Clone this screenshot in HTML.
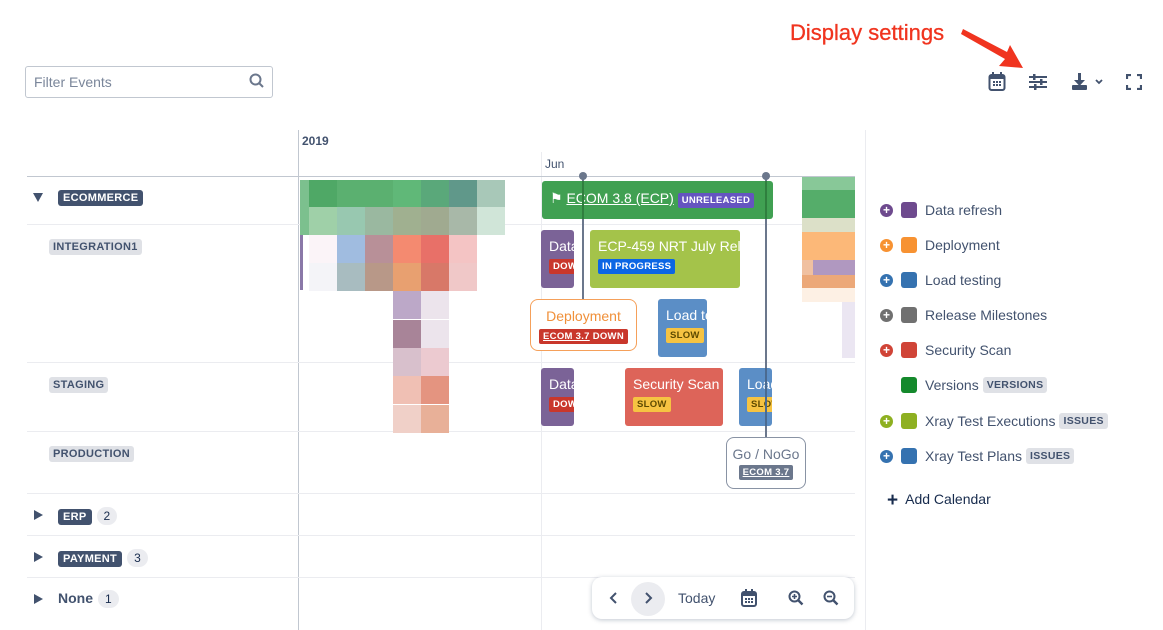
<!DOCTYPE html>
<html><head><meta charset="utf-8"><style>
*{box-sizing:border-box;margin:0;padding:0}
body{width:1163px;height:630px;overflow:hidden;background:#fff;font-family:"Liberation Sans",sans-serif;color:#172b4d;position:relative}
.a{position:absolute}
.hl{position:absolute;height:1px;background:#ebecf0}
.px{position:absolute;width:28px;height:28px}
.lab{position:absolute;font-size:11px;font-weight:bold;background:#dfe1e6;color:#42526e;padding:2px 4px;border-radius:3px;letter-spacing:.3px}
.dk{position:absolute;font-size:11px;font-weight:bold;background:#42526e;color:#fff;padding:2px 5px;border-radius:3px;letter-spacing:.3px}
.cnt{display:inline-block;font-size:12px;background:#ebecf0;color:#172b4d;border-radius:9px;padding:2px 7px;margin-left:5px}
.tri{position:absolute;width:0;height:0}
.ev{position:absolute;border-radius:3px;color:#fff;font-size:14px;overflow:hidden;white-space:nowrap;padding:8px 0 0 8px}
.bd{display:inline-block;font-size:9.5px;font-weight:bold;padding:2px 4px;border-radius:2px;letter-spacing:.3px;margin-top:5px}
.red{background:#c9372c;color:#fff}
.slow{background:#f6c342;color:#5e4a00}
.lg{position:absolute;left:880px;height:18px;font-size:14px;color:#42526e;display:flex;align-items:center}
.pl{width:13px;height:13px;border-radius:50%;color:#fff;font-size:12px;font-weight:bold;line-height:13px;text-align:center;margin-right:8px}
.sq{width:16px;height:16px;border-radius:3px;margin-right:8px}
.tag{font-size:10.5px;font-weight:bold;background:#dfe1e6;color:#42526e;padding:2px 4px;border-radius:3px;margin-left:4px;letter-spacing:.3px}
</style></head><body>

<div class="a" style="left:790px;top:20px;font-size:22px;color:#f0341f;-webkit-text-stroke:0.3px #f0341f">Display settings</div>
<svg class="a" style="left:955px;top:26px" width="80" height="50"><polygon points="6,8 8,3 52,26 55,19 68,42 44,40 50,33" fill="#f0341f"/></svg>

<div class="a" style="left:25px;top:66px;width:248px;height:32px;border:1px solid #c1c7d0;border-radius:3px;font-size:14px;color:#7a869a;padding:7px 8px">Filter Events</div>
<svg class="a" style="left:249px;top:73px" width="16" height="16"><circle cx="6.5" cy="6.5" r="5" stroke="#6b778c" stroke-width="2" fill="none"/><line x1="10" y1="10" x2="14" y2="14" stroke="#6b778c" stroke-width="2"/></svg>

<svg class="a" style="left:988px;top:72px" width="18" height="20"><rect x="1.5" y="3" width="15" height="15" rx="2" fill="none" stroke="#42526e" stroke-width="2"/><rect x="1.5" y="3" width="15" height="4" fill="#42526e"/><rect x="4" y="0" width="2" height="4" fill="#42526e"/><rect x="12" y="0" width="2" height="4" fill="#42526e"/><g fill="#42526e"><rect x="5" y="9" width="2" height="2"/><rect x="8" y="9" width="2" height="2"/><rect x="11" y="9" width="2" height="2"/><rect x="5" y="12" width="2" height="2"/><rect x="8" y="12" width="2" height="2"/><rect x="11" y="12" width="2" height="2"/></g></svg>
<svg class="a" style="left:1029px;top:74px" width="18" height="16"><g fill="#42526e"><rect y="2" width="18" height="2"/><rect y="7" width="18" height="2"/><rect y="12" width="18" height="2"/><rect x="4" y="0" width="2.5" height="6"/><rect x="11" y="5" width="2.5" height="6"/><rect x="5" y="10" width="2.5" height="6"/></g></svg>
<svg class="a" style="left:1072px;top:73px" width="36" height="18"><g fill="#42526e"><rect x="6" y="0" width="3" height="8"/><polygon points="2,7 13,7 7.5,13"/><rect x="0" y="12" width="15" height="5" rx="1"/></g><polyline points="24,7 27,10 30,7" fill="none" stroke="#42526e" stroke-width="1.8"/></svg>
<svg class="a" style="left:1126px;top:74px" width="16" height="16" fill="none" stroke="#42526e" stroke-width="2.2"><path d="M1 5V1H5M11 1H15V5M15 11V15H11M5 15H1V11"/></svg>

<!-- grid -->
<div class="a" style="left:298px;top:130px;width:1px;height:500px;background:#c1c7d0"></div>
<div class="a" style="left:865px;top:130px;width:1px;height:500px;background:#ebecf0"></div>
<div class="a" style="left:541px;top:152px;width:1px;height:478px;background:#ebecf0"></div>
<div class="a" style="left:27px;top:176px;width:828px;height:1px;background:#c1c7d0"></div>
<div class="hl" style="left:27px;top:224px;width:828px"></div>
<div class="hl" style="left:27px;top:362px;width:828px"></div>
<div class="hl" style="left:27px;top:431px;width:828px"></div>
<div class="hl" style="left:27px;top:493px;width:828px"></div>
<div class="hl" style="left:27px;top:535px;width:828px"></div>
<div class="hl" style="left:27px;top:577px;width:828px"></div>
<div class="a" style="left:302px;top:134px;font-size:12px;font-weight:bold;color:#42526e">2019</div>
<div class="a" style="left:545px;top:157px;font-size:12px;color:#42526e">Jun</div>

<!-- left labels -->
<div class="tri" style="left:33px;top:193px;border-left:5px solid transparent;border-right:5px solid transparent;border-top:9px solid #42526e"></div>
<div class="dk" style="left:58px;top:190px">ECOMMERCE</div>
<div class="lab" style="left:49px;top:239px">INTEGRATION1</div>
<div class="lab" style="left:49px;top:377px">STAGING</div>
<div class="lab" style="left:49px;top:446px">PRODUCTION</div>
<div class="tri" style="left:34px;top:510px;border-top:5px solid transparent;border-bottom:5px solid transparent;border-left:9px solid #42526e"></div>
<div class="a" style="left:58px;top:507px"><span class="dk" style="position:static;display:inline-block">ERP</span><span class="cnt">2</span></div>
<div class="tri" style="left:34px;top:552px;border-top:5px solid transparent;border-bottom:5px solid transparent;border-left:9px solid #42526e"></div>
<div class="a" style="left:58px;top:549px"><span class="dk" style="position:static;display:inline-block">PAYMENT</span><span class="cnt">3</span></div>
<div class="tri" style="left:34px;top:594px;border-top:5px solid transparent;border-bottom:5px solid transparent;border-left:9px solid #42526e"></div>
<div class="a" style="left:58px;top:590px;font-size:14px;font-weight:bold;color:#42526e">None<span class="cnt" style="font-weight:normal">1</span></div>

<!-- pixel block left -->
<div class="a" style="left:300px;top:180px;width:9px;height:55px;background:#7cc08e"></div>
<div class="a" style="left:300px;top:235px;width:3px;height:55px;background:#8a78a8"></div>
<div class="px" style="left:309px;top:180px;background:#4fa866"></div><div class="px" style="left:337px;top:180px;background:#5bb070"></div><div class="px" style="left:365px;top:180px;background:#5bb070"></div><div class="px" style="left:393px;top:180px;background:#60b878"></div><div class="px" style="left:421px;top:180px;background:#5aa87a"></div><div class="px" style="left:449px;top:180px;background:#60988a"></div><div class="px" style="left:477px;top:180px;background:#a8c8b8"></div>
<div class="px" style="left:309px;top:207px;background:#9fd0a8"></div><div class="px" style="left:337px;top:207px;background:#98c8b0"></div><div class="px" style="left:365px;top:207px;background:#9ab8a0"></div><div class="px" style="left:393px;top:207px;background:#a0b090"></div><div class="px" style="left:421px;top:207px;background:#a0aa90"></div><div class="px" style="left:449px;top:207px;background:#a8b8a8"></div><div class="px" style="left:477px;top:207px;background:#d0e5d8"></div>
<div class="px" style="left:309px;top:235px;background:#fbf4f8"></div><div class="px" style="left:337px;top:235px;background:#a0bce0"></div><div class="px" style="left:365px;top:235px;background:#b89098"></div><div class="px" style="left:393px;top:235px;background:#f48a70"></div><div class="px" style="left:421px;top:235px;background:#e87068"></div><div class="px" style="left:449px;top:235px;background:#f4c4c4"></div>
<div class="px" style="left:309px;top:263px;background:#f4f4f8"></div><div class="px" style="left:337px;top:263px;background:#a8bcc0"></div><div class="px" style="left:365px;top:263px;background:#b89888"></div><div class="px" style="left:393px;top:263px;background:#e8a070"></div><div class="px" style="left:421px;top:263px;background:#d87868"></div><div class="px" style="left:449px;top:263px;background:#f0c8c8"></div>
<div class="px" style="left:393px;top:291px;background:#bca8c8"></div><div class="px" style="left:421px;top:291px;background:#ece4ec"></div>
<div class="px" style="left:393px;top:320px;background:#a88498"></div><div class="px" style="left:421px;top:320px;background:#ece4ec"></div>
<div class="px" style="left:393px;top:348px;background:#d8c0cc"></div><div class="px" style="left:421px;top:348px;background:#eccad0"></div>
<div class="px" style="left:393px;top:376px;background:#f0c0b4"></div><div class="px" style="left:421px;top:376px;background:#e49480"></div>
<div class="px" style="left:393px;top:405px;background:#f0d0c8"></div><div class="px" style="left:421px;top:405px;background:#e8b098"></div>

<!-- pixel block right -->
<div class="a" style="left:802px;top:177px;width:53px;height:13px;background:#88c898"></div>
<div class="a" style="left:802px;top:190px;width:53px;height:28px;background:#55ad6a"></div>
<div class="a" style="left:802px;top:218px;width:53px;height:14px;background:#dce0c8"></div>
<div class="a" style="left:802px;top:232px;width:53px;height:28px;background:#fcb878"></div>
<div class="a" style="left:802px;top:260px;width:11px;height:15px;background:#f0c0a0"></div>
<div class="a" style="left:813px;top:260px;width:42px;height:15px;background:#b098c0"></div>
<div class="a" style="left:802px;top:275px;width:53px;height:13px;background:#eca878"></div>
<div class="a" style="left:802px;top:288px;width:53px;height:14px;background:#fdf0e4"></div>
<div class="a" style="left:842px;top:302px;width:13px;height:56px;background:#ebe6f2"></div>

<!-- milestone lines -->
<div class="a" style="left:582px;top:175px;width:2px;height:125px;background:#6b778c"></div>
<div class="a" style="left:765px;top:175px;width:2px;height:262px;background:#6b778c"></div>
<div class="a" style="left:579px;top:172px;width:8px;height:8px;border-radius:50%;background:#6b778c"></div>
<div class="a" style="left:762px;top:172px;width:8px;height:8px;border-radius:50%;background:#6b778c"></div>

<!-- events -->
<div class="ev" style="left:542px;top:181px;width:231px;height:38px;background:#40a052;padding:9px 0 0 8px;font-size:14px">&#9873; <u>ECOM 3.8 (ECP)</u> <span class="bd" style="background:#6554c0;margin:0">UNRELEASED</span></div>
<div class="a" style="left:582px;top:181px;width:2px;height:38px;background:#2f7f3e"></div>
<div class="a" style="left:765px;top:181px;width:2px;height:38px;background:#2f7f3e"></div>
<div class="ev" style="left:541px;top:230px;width:33px;height:58px;background:#7b6397">Data<br><span class="bd red">DOWN</span></div>
<div class="ev" style="left:590px;top:230px;width:150px;height:58px;background:#a4c34a">ECP-459 NRT July Release<br><span class="bd" style="background:#0c66e4">IN PROGRESS</span></div>
<div class="a" style="left:582px;top:230px;width:2px;height:70px;background:#6b778c"></div>
<div class="ev" style="left:530px;top:299px;width:107px;height:52px;background:#fff;border:1px solid #f5a05a;border-radius:8px;color:#f0903a;text-align:center;padding:8px 0 0 0">Deployment<br><span class="bd red"><u>ECOM 3.7</u> DOWN</span></div>
<div class="ev" style="left:658px;top:299px;width:49px;height:58px;background:#5b8ec6">Load testing<br><span class="bd slow">SLOW</span></div>
<div class="ev" style="left:541px;top:368px;width:33px;height:58px;background:#7b6397">Data<br><span class="bd red">DOWN</span></div>
<div class="ev" style="left:625px;top:368px;width:98px;height:58px;background:#dd6459">Security Scan<br><span class="bd slow">SLOW</span></div>
<div class="ev" style="left:739px;top:368px;width:33px;height:58px;background:#5b8ec6">Load<br><span class="bd slow">SLOW</span></div>
<div class="a" style="left:765px;top:368px;width:2px;height:58px;background:#4a6a90"></div>
<div class="ev" style="left:726px;top:437px;width:80px;height:52px;background:#fff;border:1px solid #8993a4;border-radius:8px;color:#6b778c;text-align:center;padding:8px 0 0 0">Go / NoGo<br><span class="bd" style="background:#6b778c;color:#fff;margin-top:3px"><u>ECOM 3.7</u></span></div>

<!-- bottom toolbar -->
<div class="a" style="left:592px;top:577px;width:262px;height:42px;background:#fff;border-radius:10px;box-shadow:0 1px 5px rgba(9,30,66,.25)"></div>
<svg class="a" style="left:608px;top:591px" width="12" height="14"><polyline points="8,2 3,7 8,12" fill="none" stroke="#42526e" stroke-width="2"/></svg>
<div class="a" style="left:631px;top:582px;width:34px;height:34px;border-radius:50%;background:#ebecf0"></div>
<svg class="a" style="left:642px;top:591px" width="12" height="14"><polyline points="4,2 9,7 4,12" fill="none" stroke="#42526e" stroke-width="2"/></svg>
<div class="a" style="left:678px;top:590px;font-size:14px;color:#42526e">Today</div>
<svg class="a" style="left:741px;top:589px" width="16" height="18"><rect x="1" y="3" width="14" height="14" rx="2" fill="none" stroke="#42526e" stroke-width="2"/><rect x="1" y="3" width="14" height="4" fill="#42526e"/><rect x="4" y="0" width="2" height="4" fill="#42526e"/><rect x="10" y="0" width="2" height="4" fill="#42526e"/><g fill="#42526e"><rect x="4" y="9" width="2" height="2"/><rect x="7" y="9" width="2" height="2"/><rect x="10" y="9" width="2" height="2"/><rect x="4" y="12" width="2" height="2"/><rect x="7" y="12" width="2" height="2"/><rect x="10" y="12" width="2" height="2"/></g></svg>
<svg class="a" style="left:788px;top:590px" width="16" height="16"><circle cx="6.5" cy="6.5" r="5" fill="none" stroke="#42526e" stroke-width="2"/><line x1="10" y1="10" x2="14.5" y2="14.5" stroke="#42526e" stroke-width="2.4"/><path d="M4 6.5H9M6.5 4V9" stroke="#42526e" stroke-width="1.6"/></svg>
<svg class="a" style="left:823px;top:590px" width="16" height="16"><circle cx="6.5" cy="6.5" r="5" fill="none" stroke="#42526e" stroke-width="2"/><line x1="10" y1="10" x2="14.5" y2="14.5" stroke="#42526e" stroke-width="2.4"/><path d="M4 6.5H9" stroke="#42526e" stroke-width="1.6"/></svg>

<!-- legend -->
<div class="lg" style="top:201px"><div class="pl" style="background:#6e4a8e">+</div><div class="sq" style="background:#6e4a8e"></div>Data refresh</div>
<div class="lg" style="top:236px"><div class="pl" style="background:#f79232">+</div><div class="sq" style="background:#f79232"></div>Deployment</div>
<div class="lg" style="top:271px"><div class="pl" style="background:#3572b0">+</div><div class="sq" style="background:#3572b0"></div>Load testing</div>
<div class="lg" style="top:306px"><div class="pl" style="background:#707070">+</div><div class="sq" style="background:#707070"></div>Release Milestones</div>
<div class="lg" style="top:341px"><div class="pl" style="background:#d04437">+</div><div class="sq" style="background:#d04437"></div>Security Scan</div>
<div class="lg" style="top:376px"><div class="pl" style="background:transparent"></div><div class="sq" style="background:#14892c"></div>Versions<span class="tag">VERSIONS</span></div>
<div class="lg" style="top:412px"><div class="pl" style="background:#8eb021">+</div><div class="sq" style="background:#8eb021"></div>Xray Test Executions<span class="tag">ISSUES</span></div>
<div class="lg" style="top:447px"><div class="pl" style="background:#3572b0">+</div><div class="sq" style="background:#3572b0"></div>Xray Test Plans<span class="tag">ISSUES</span></div>
<div class="a" style="left:887px;top:490px;font-size:14px;color:#172b4d"><span style="font-size:19px;font-weight:bold;vertical-align:-2px">+</span>&nbsp; Add Calendar</div>
</body></html>
